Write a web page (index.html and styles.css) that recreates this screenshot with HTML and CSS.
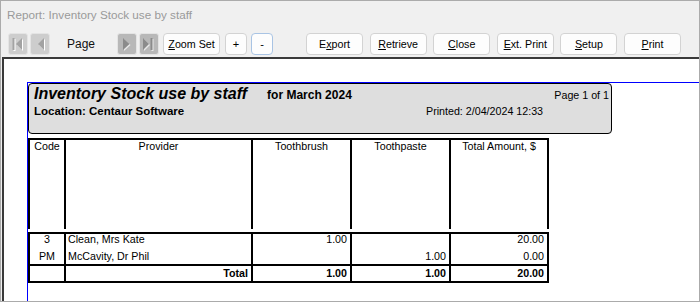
FILE: index.html
```html
<!DOCTYPE html>
<html lang="en">

<head>
  <meta charset="UTF-8" />
  <title>Report: Inventory Stock use by staff</title>
  <link rel="stylesheet" href="styles.css">
</head>

<body>
  <div class="window">
    <div class="titlebar">Report: Inventory Stock use by staff</div>

    <div class="toolbar">
      <span class="navbtn off">
        <svg width="18" height="20" viewBox="0 0 18 20">
          <rect x="4.5" y="5" width="2" height="12" fill="#fff" />
          <polygon points="14,5 14,17 8,11" fill="#fff" />
          <rect x="3.5" y="4" width="2" height="12" />
          <polygon points="13,4 13,16 7,10" />
        </svg>
      </span>
      <span class="navbtn off second">
        <svg width="18" height="20" viewBox="0 0 18 20">
          <polygon points="14,5 14,17 8,11" fill="#fff" />
          <polygon points="13,4 13,16 7,10" />
        </svg>
      </span>
      <span class="page-label">Page</span>
      <span class="navbtn">
        <svg width="18" height="20" viewBox="0 0 18 20">
          <polygon points="6,5 6,17 12.5,11" fill="#e8e8e8" />
          <polygon points="5,4 5,16 11.5,10" />
        </svg>
      </span>
      <span class="navbtn second">
        <svg width="18" height="20" viewBox="0 0 18 20">
          <polygon points="4,5 4,17 10,11" fill="#e8e8e8" />
          <rect x="11.5" y="5" width="2" height="12" fill="#e8e8e8" />
          <polygon points="3,4 3,16 9,10" />
          <rect x="10.5" y="4" width="2" height="12" />
        </svg>
      </span>
      <button class="btn zoomset"><u>Z</u>oom Set</button>
      <button class="btn small plus">+</button>
      <button class="btn small minus">-</button>

      <div class="actions">
        <button class="btn">E<u>x</u>port</button>
        <button class="btn"><u>R</u>etrieve</button>
        <button class="btn"><u>C</u>lose</button>
        <button class="btn"><u>E</u>xt. Print</button>
        <button class="btn"><u>S</u>etup</button>
        <button class="btn"><u>P</u>rint</button>
      </div>
    </div>

    <div class="viewer">
      <div class="page">
        <div class="banner">
          <div class="heading">
            <span class="report-title">Inventory Stock use by staff</span>
            <span class="period">for March 2024</span>
            <span class="pageno">Page 1 of 1</span>
          </div>
          <div class="subline">
            <span class="location">Location: Centaur Software</span>
            <span class="printed">Printed: 2/04/2024 12:33</span>
          </div>
        </div>

        <div class="grid head">
          <div class="cell">Code</div>
          <div class="cell">Provider</div>
          <div class="cell">Toothbrush</div>
          <div class="cell">Toothpaste</div>
          <div class="cell last">Total Amount, $</div>
        </div>

        <div class="grid body">
          <div class="cell r1 mid">3</div>
          <div class="cell r1 name">Clean, Mrs Kate</div>
          <div class="cell r1 num">1.00</div>
          <div class="cell r1 num"></div>
          <div class="cell r1 num last">20.00</div>

          <div class="cell r2 mid">PM</div>
          <div class="cell r2 name">McCavity, Dr Phil</div>
          <div class="cell r2 num"></div>
          <div class="cell r2 num">1.00</div>
          <div class="cell r2 num last">0.00</div>

          <div class="cell total"></div>
          <div class="cell total num">Total</div>
          <div class="cell total num">1.00</div>
          <div class="cell total num">1.00</div>
          <div class="cell total num last">20.00</div>
        </div>
      </div>
    </div>
  </div>
</body>

</html>
```

FILE: styles.css
```css
body {
  margin: 0;
  background-color: #f0f0f0;
  font-family: "Liberation Sans", Arial, sans-serif;
  overflow: hidden;
}

.window {
  width: 700px;
  height: 302px;
  box-sizing: border-box;
  border: 1px solid #ababab;
  display: flex;
  flex-direction: column;
}

.titlebar {
  height: 28px;
  line-height: 28px;
  padding-left: 6px;
  font-size: 11.7px;
  color: #9a9a9a;
}

/* toolbar */
.toolbar {
  display: flex;
  align-items: center;
  height: 22px;
  margin-top: 4px;
  padding-left: 7px;
}

.navbtn {
  display: block;
  width: 18px;
  height: 20px;
  border: 1px solid #e4e4e4;
  border-radius: 3px;
  background: #cdcdcd;
  fill: #a3a3a3;
}

.navbtn svg {
  display: block;
}

.navbtn.second {
  margin-left: 2px;
}

.navbtn:not(.off) {
  background: #b8b8b8;
  fill: #8b8b8b;
}

.page-label {
  margin: 0 22px 0 17px;
  font-size: 12px;
  color: #111;
}

.btn {
  height: 22px;
  box-sizing: border-box;
  padding: 0;
  border: 1px solid #d3d3d3;
  border-radius: 4px;
  background: #fdfdfd;
  font-family: "Liberation Sans", Arial, sans-serif;
  font-size: 10.7px;
  color: #000;
}

.zoomset {
  width: 57px;
  margin-left: 4px;
}

.small {
  width: 22px;
  font-size: 11px;
}

.plus {
  margin-left: 5px;
}

.minus {
  margin-left: 4px;
  border-color: #a9c4e4;
}

.actions {
  display: flex;
  gap: 6.6px;
  margin-left: 33px;
}

.actions .btn {
  width: 57px;
}

/* report preview */
.viewer {
  flex: 1;
  display: flex;
  flex-direction: column;
  margin: 2px 0 0 1px;
  border-top: 2px solid #3a3a3a;
  border-left: 2px solid #3a3a3a;
  background: #fff;
}

.page {
  flex: 1;
  margin: 23px 0 0 23px;
  border-top: 1px solid #0000ff;
  border-left: 1px solid #0000ff;
  color: #000;
}

.banner {
  width: 584px;
  height: 51px;
  box-sizing: border-box;
  padding: 0 2px 0 5px;
  background: #dedede;
  border: 1px solid #000;
  border-radius: 4px;
}

.heading {
  display: flex;
  align-items: baseline;
  line-height: 20px;
}

.report-title {
  font-size: 16px;
  font-weight: bold;
  font-style: italic;
}

.period {
  margin-left: 20px;
  font-size: 12px;
  font-weight: bold;
}

.pageno {
  margin-left: auto;
  font-size: 10.7px;
}

.subline {
  display: flex;
  align-items: baseline;
  line-height: 13px;
  font-size: 10.7px;
}

.location {
  width: 392px;
  font-size: 11.5px;
  font-weight: bold;
}

/* table */
.grid {
  display: grid;
  grid-template-columns: 36px 187px 99px 99px 100px;
  width: 521px;
  font-size: 10.7px;
}

.cell {
  box-sizing: border-box;
  border-left: 2px solid #000;
  white-space: nowrap;
}

.cell.last {
  border-right: 2px solid #000;
}

.head {
  margin-top: 4px;
  height: 89px;
  border-top: 2px solid #000;
}

.head .cell {
  text-align: center;
  line-height: 13px;
}

.body {
  margin-top: 3px;
  border-top: 2px solid #000;
  border-bottom: 2px solid #000;
}

.r1 {
  height: 16px;
  line-height: 11px;
}

.r2 {
  height: 14px;
  line-height: 12px;
}

.total {
  height: 17px;
  padding-top: 1px;
  line-height: 12px;
  border-top: 2px solid #000;
  font-weight: bold;
}

.mid {
  text-align: center;
}

.name {
  padding-left: 2px;
}

.num {
  text-align: right;
  padding-right: 3px;
}
```
